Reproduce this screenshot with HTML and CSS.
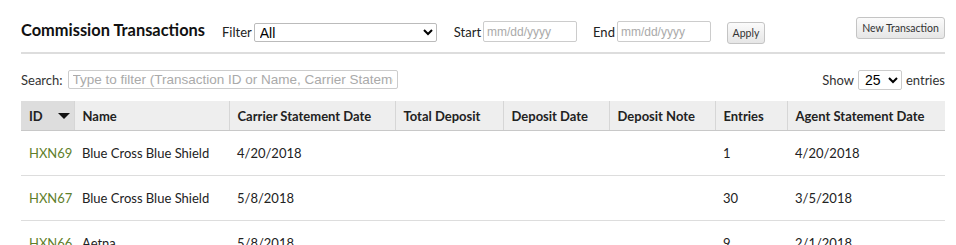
FILE: index.html
```html
<!DOCTYPE html>
<html>
<head>
<meta charset="utf-8">
<link rel="stylesheet" href="styles.css">
</head>
<body>
<div class="page">
  <div class="toolbar">
    <h1 class="title">Commission Transactions</h1>
    <label class="lbl">Filter</label>
    <select class="filter-select"><option>All</option></select>
    <label class="lbl lbl-start">Start</label>
    <input class="date-input" type="text" placeholder="mm/dd/yyyy">
    <label class="lbl lbl-end">End</label>
    <input class="date-input" type="text" placeholder="mm/dd/yyyy">
    <button class="btn btn-apply">Apply</button>
    <span class="spacer"></span>
    <button class="btn btn-new">New Transaction</button>
  </div>
  <div class="controls">
    <label class="search-lbl">Search:</label>
    <input class="search-input" type="text" placeholder="Type to filter (Transaction ID or Name, Carrier Statement Date)">
    <span class="spacer"></span>
    <label class="show-lbl">Show</label>
    <select class="len-select"><option>25</option></select>
    <label class="entries-lbl">entries</label>
  </div>
  <table class="grid">
    <colgroup>
      <col style="width:53px"><col style="width:155px"><col style="width:166px"><col style="width:108px">
      <col style="width:106px"><col style="width:106px"><col style="width:72px"><col style="width:158px">
    </colgroup>
    <thead>
      <tr>
        <th class="sorted"><span>ID</span><span class="caret"></span></th>
        <th>Name</th>
        <th>Carrier Statement Date</th>
        <th>Total Deposit</th>
        <th>Deposit Date</th>
        <th>Deposit Note</th>
        <th>Entries</th>
        <th>Agent Statement Date</th>
      </tr>
    </thead>
    <tbody>
      <tr><td class="tid">HXN69</td><td>Blue Cross Blue Shield</td><td>4/20/2018</td><td></td><td></td><td></td><td>1</td><td>4/20/2018</td></tr>
      <tr><td class="tid">HXN67</td><td>Blue Cross Blue Shield</td><td>5/8/2018</td><td></td><td></td><td></td><td>30</td><td>3/5/2018</td></tr>
      <tr><td class="tid">HXN66</td><td>Aetna</td><td>5/8/2018</td><td></td><td></td><td></td><td>9</td><td>2/1/2018</td></tr>
    </tbody>
  </table>
</div>
</body>
</html>
```
FILE: styles.css
```css
html, body {
  margin: 0;
  padding: 0;
  background: #fff;
}
body {
  font-family: "Lato", "Open Sans", sans-serif;
  color: #222;
  overflow: hidden;
}
.page {
  width: 924px;
  margin-left: 21px;
}
.toolbar {
  display: flex;
  align-items: center;
  box-sizing: border-box;
  height: 54px;
  padding-top: 7px;
  border-bottom: 2px solid #ddd;
}
.title {
  margin: 0 17px 0 0;
  font-size: 16.4px;
  font-weight: 700;
  color: #111;
}
.lbl {
  font-size: 13px;
  color: #222;
  margin-right: 2px;
  margin-top: 4px;
}
.lbl-start { margin-left: 17px; }
.lbl-end { margin-left: 16px; }
.filter-select {
  width: 183px;
  height: 19px;
  margin-top: 5px;
  font-family: "Liberation Sans", Arial, sans-serif;
  font-size: 14px;
  border: 1px solid #bbb;
  border-radius: 2px;
  background: #fff;
  color: #000;
  padding: 0 1px;
}
.date-input {
  width: 94px;
  height: 21px;
  margin-top: 4px;
  box-sizing: border-box;
  border: 1px solid #ccc;
  border-radius: 2px;
  font-family: "Liberation Sans", Arial, sans-serif;
  font-size: 12px;
  padding: 0 3px;
}
.date-input::placeholder, .search-input::placeholder {
  color: #aaa;
}
.btn {
  font-family: "Lato", sans-serif;
  font-size: 10.5px;
  color: #333;
  border: 1px solid #c4c4c4;
  border-radius: 3px;
  background: linear-gradient(#fbfbfb, #e6e6e6);
  padding: 0;
  cursor: pointer;
}
.btn-apply {
  margin-left: 16px;
  width: 38px;
  height: 22px;
  margin-top: 6px;
}
.btn-new {
  width: 89px;
  height: 22px;
  margin-top: -3px;
}
.spacer { flex: 1; }
.controls {
  display: flex;
  align-items: center;
  box-sizing: border-box;
  height: 47px;
  padding-top: 4px;
  font-size: 13px;
  color: #333;
}
.search-lbl { margin-right: 5px; }
.search-input {
  width: 330px;
  height: 19px;
  box-sizing: border-box;
  border: 1px solid #ccc;
  border-radius: 2px;
  font-family: "Liberation Sans", Arial, sans-serif;
  font-size: 13.5px;
  padding: 0 4px;
}
.show-lbl { margin-right: 4px; }
.len-select {
  width: 44px;
  height: 20px;
  font-family: "Liberation Sans", Arial, sans-serif;
  font-size: 14px;
  border: 1px solid #ccc;
  border-radius: 2px;
  background: #fff;
  color: #000;
  padding: 0 2px;
}
.entries-lbl { margin-left: 4px; }
.grid {
  width: 924px;
  table-layout: fixed;
  border-collapse: collapse;
  font-size: 13px;
}
.grid th {
  background: #eee;
  height: 29px;
  text-align: left;
  font-weight: 700;
  color: #222;
  padding: 0 8px;
  border-left: 1px solid #d6d6d6;
  border-bottom: 1px solid #c8c8c8;
  white-space: nowrap;
}
.grid th:first-child { border-left: none; }
.grid th.sorted {
  background: #ddd;
  position: relative;
}
.caret {
  position: absolute;
  right: 4px;
  top: 12px;
  width: 0;
  height: 0;
  border-left: 6px solid transparent;
  border-right: 6px solid transparent;
  border-top: 6px solid #111;
}
.grid td {
  height: 44px;
  padding: 0 8px;
  border-bottom: 1px solid #ddd;
  color: #222;
  white-space: nowrap;
}
.grid td.tid {
  color: #5f7f2b;
}
```
